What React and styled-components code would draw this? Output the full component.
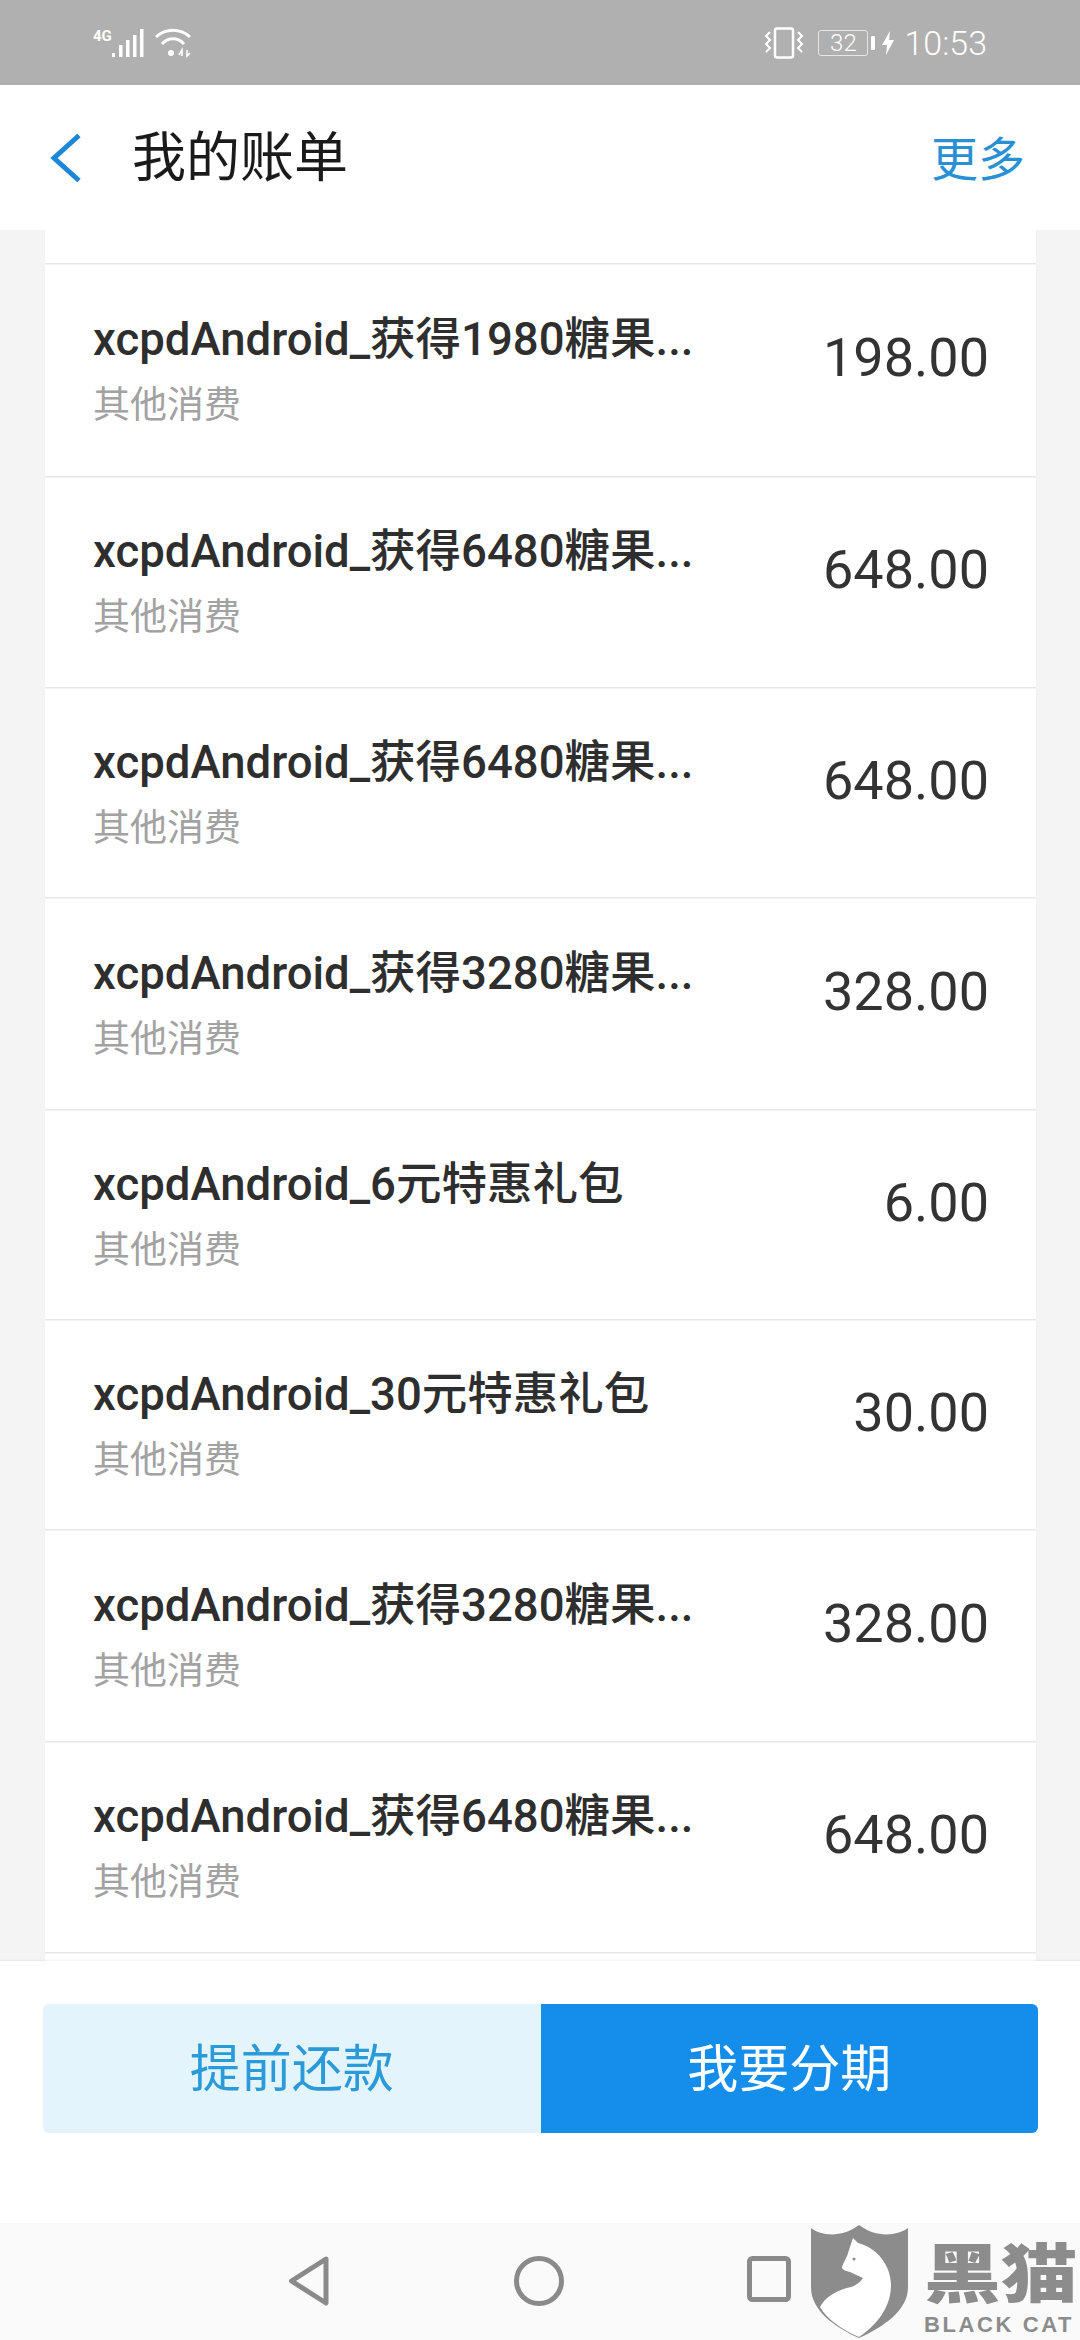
import React from 'react'
import styled, { createGlobalStyle } from 'styled-components'

const bills = [
  { title: 'xcpdAndroid_获得1980糖果...', amount: '198.00', height: 211 },
  { title: 'xcpdAndroid_获得6480糖果...', amount: '648.00', height: 209 },
  { title: 'xcpdAndroid_获得6480糖果...', amount: '648.00', height: 208 },
  { title: 'xcpdAndroid_获得3280糖果...', amount: '328.00', height: 210 },
  { title: 'xcpdAndroid_6元特惠礼包', amount: '6.00', height: 208 },
  { title: 'xcpdAndroid_30元特惠礼包', amount: '30.00', height: 208 },
  { title: 'xcpdAndroid_获得3280糖果...', amount: '328.00', height: 210 },
  { title: 'xcpdAndroid_获得6480糖果...', amount: '648.00', height: 209 },
]

function App() {
  return (
    <>
      <GlobalStyle />
      <Page>
        <StatusBar>
          <StatusGroup>
            <NetworkLabel>4G</NetworkLabel>
            <SignalIcon />
            <WifiIcon />
          </StatusGroup>
          <StatusGroup>
            <VibrateIcon />
            <Battery>32</Battery>
            <BatteryNub />
            <BoltIcon />
            <Clock>10:53</Clock>
          </StatusGroup>
        </StatusBar>

        <Header>
          <HeaderLeft>
            <svg width="32" height="48" viewBox="0 0 32 48">
              <path d="M29 1.5 L4 24 L29 46.5" fill="none" stroke="#1c87d8" strokeWidth="5" />
            </svg>
            <Title>我的账单</Title>
          </HeaderLeft>
          <MoreLink>更多</MoreLink>
        </Header>

        <BillList>
          <PartialCard />
          {bills.map((bill, i) => (
            <BillCard key={i} $height={bill.height}>
              <BillText>
                <BillTitle>{bill.title}</BillTitle>
                <BillType>其他消费</BillType>
              </BillText>
              <Amount>{bill.amount}</Amount>
            </BillCard>
          ))}
          <PartialCard />
        </BillList>

        <Footer>
          <ButtonRow>
            <ActionButton>提前还款</ActionButton>
            <ActionButton $primary>我要分期</ActionButton>
          </ButtonRow>
        </Footer>

        <NavBar>
          <svg width="42" height="50" viewBox="0 0 42 50">
            <path d="M38 3 L3.5 25 L38 47 Z" fill="none" stroke="#8a8a8a" strokeWidth="5" strokeLinejoin="round" />
          </svg>
          <svg width="50" height="50" viewBox="0 0 50 50">
            <circle cx="25" cy="25" r="22.5" fill="none" stroke="#8a8a8a" strokeWidth="5" />
          </svg>
          <svg width="44" height="46" viewBox="0 0 44 46">
            <rect x="2.5" y="2.5" width="39" height="41" rx="3" fill="none" stroke="#8a8a8a" strokeWidth="5" />
          </svg>
        </NavBar>

        <Watermark>
          <svg width="98" height="114" viewBox="0 0 98 114">
            <path
              d="M0 3 C8 10 30 14 48 0 C66 14 88 10 97 3 L97 62 C97 86 72 102 48 113 C24 102 0 86 0 62 Z"
              fill="#8c8c8c"
            />
            <path
              d="M42 13 L47 18 C65 22 80 40 80 60 C80 82 66 100 48 112 C30 104 16 94 9 82 C14 72 26 65 40 62 C46 60 50 56 52 53 L39 47 C35 46 32 45 31 43 C32 37 36 33 37 28 Z"
              fill="#fff"
            />
            <circle cx="43" cy="34" r="1.5" fill="#8c8c8c" />
          </svg>
          <WatermarkText>
            <WatermarkName>黑猫</WatermarkName>
            <WatermarkLatin>BLACK CAT</WatermarkLatin>
          </WatermarkText>
        </Watermark>
      </Page>
    </>
  )
}

function SignalIcon() {
  return (
    <SignalSvg width="32" height="30" viewBox="0 0 32 30">
      <rect x="0" y="25" width="3" height="4" fill="#fff" />
      <rect x="7" y="17" width="3.5" height="12" fill="#fff" />
      <rect x="14" y="12" width="3.5" height="17" fill="#fff" />
      <rect x="21" y="7" width="3.5" height="22" fill="#fff" />
      <rect x="28" y="1" width="3.5" height="28" fill="#fff" />
    </SignalSvg>
  )
}

function WifiIcon() {
  return (
    <svg width="38" height="30" viewBox="0 0 38 30">
      <path d="M2 9 C12 0 26 0 36 9" fill="none" stroke="#fff" strokeWidth="3" />
      <path d="M8 16 C14 9 24 9 30 16" fill="none" stroke="#fff" strokeWidth="3" />
      <circle cx="17" cy="25" r="3" fill="#fff" />
      <path d="M25 27 L28 22 L28 28 M33 22 L33 28 L36 25" fill="none" stroke="#fff" strokeWidth="1.6" />
    </svg>
  )
}

function VibrateIcon() {
  return (
    <svg width="40" height="32" viewBox="0 0 40 32">
      <rect x="11" y="1.5" width="18" height="29" rx="2" fill="none" stroke="#fff" strokeWidth="2.5" />
      <path d="M6 5 L2 9 L6 13 L2 17 L6 21 L2 25" fill="none" stroke="#fff" strokeWidth="2" />
      <path d="M34 5 L38 9 L34 13 L38 17 L34 21 L38 25" fill="none" stroke="#fff" strokeWidth="2" />
    </svg>
  )
}

function BoltIcon() {
  return (
    <BoltSvg width="12" height="24" viewBox="0 0 12 24">
      <path d="M8 0 L0 14 L5 14 L4 24 L12 9 L7 9 Z" fill="#fff" />
    </BoltSvg>
  )
}

const GlobalStyle = createGlobalStyle`
  html, body {
    margin: 0;
    padding: 0;
    background: #fff;
  }
`

const Page = styled.div`
  position: relative;
  width: 1080px;
  height: 2340px;
  display: flex;
  flex-direction: column;
  overflow: hidden;
  font-family: 'Roboto', 'Noto Sans CJK SC', sans-serif;
`

const StatusBar = styled.div`
  flex: 0 0 85px;
  display: flex;
  justify-content: space-between;
  align-items: center;
  padding: 0 93px;
  background: #b0b0b0;
  color: #fff;
`

const StatusGroup = styled.div`
  display: flex;
  align-items: center;
`

const NetworkLabel = styled.span`
  align-self: flex-start;
  font-size: 15px;
  font-weight: 700;
  line-height: 17px;
`

const SignalSvg = styled.svg`
  margin-right: 10px;
`

const Battery = styled.span`
  width: 50px;
  height: 26px;
  margin-left: 14px;
  box-sizing: border-box;
  border: 1.5px solid #e6e6e6;
  border-radius: 3px;
  text-align: center;
  font-size: 24px;
  font-weight: 300;
  line-height: 24px;
`

const BatteryNub = styled.span`
  width: 4px;
  height: 14px;
  margin-left: 3px;
  background: #fff;
  border-radius: 1px;
`

const BoltSvg = styled.svg`
  margin: 0 10px 0 7px;
`

const Clock = styled.span`
  font-size: 34px;
  font-weight: 300;
  line-height: 40px;
`

const Header = styled.div`
  flex: 0 0 145px;
  display: flex;
  justify-content: space-between;
  align-items: center;
  padding: 0 55px 0 50px;
  background: #fff;
`

const HeaderLeft = styled.div`
  display: flex;
  align-items: center;
  gap: 50px;
`

const Title = styled.h1`
  margin: -8px 0 0;
  font-size: 54px;
  font-weight: 400;
  color: #1a1a1a;
`

const MoreLink = styled.span`
  margin-top: -4px;
  font-size: 47px;
  color: #2a90d4;
`

const BillList = styled.div`
  flex: 1;
  min-height: 0;
  overflow: hidden;
  display: flex;
  flex-direction: column;
  gap: 2px;
  padding: 0 44px 0 45px;
  background: #f4f4f4;
`

const PartialCard = styled.div`
  flex: 0 0 33px;
  background: #fff;
  box-shadow: 0 1px 1px rgba(0, 0, 0, 0.05);
`

const BillCard = styled.div`
  flex: 0 0 ${(p) => p.$height}px;
  display: flex;
  justify-content: space-between;
  align-items: center;
  padding: 0 47px 0 48px;
  background: #fff;
  box-shadow: 0 1px 1px rgba(0, 0, 0, 0.05);
`

const BillText = styled.div`
  display: flex;
  flex-direction: column;
  margin-top: 4px;
`

const BillTitle = styled.div`
  font-size: 45.5px;
  font-weight: 500;
  line-height: 63px;
  color: #2e2e2e;
  white-space: nowrap;
`

const BillType = styled.div`
  margin-top: 3px;
  font-size: 37px;
  line-height: 63px;
  color: #a2a2a2;
`

const Amount = styled.div`
  margin-top: -26px;
  font-size: 54px;
  font-weight: 400;
  color: #333;
`

const Footer = styled.div`
  flex: 0 0 262px;
  box-sizing: border-box;
  padding: 43px 42px 0 43px;
  background: #fff;
  box-shadow: 0 -1px 2px rgba(0, 0, 0, 0.06);
  z-index: 1;
`

const ButtonRow = styled.div`
  display: grid;
  grid-template-columns: 1fr 1fr;
  height: 129px;
  border-radius: 6px;
  overflow: hidden;
`

const ActionButton = styled.div`
  display: flex;
  justify-content: center;
  align-items: center;
  padding-bottom: 8px;
  font-size: 51px;
  color: ${(p) => (p.$primary ? '#fff' : '#2a9bd8')};
  background: ${(p) => (p.$primary ? '#148deb' : '#e3f4fc')};
`

const NavBar = styled.div`
  flex: 0 0 117px;
  box-sizing: border-box;
  display: flex;
  align-items: flex-start;
  padding: 33px 289px 0 288px;
  justify-content: space-between;
  background: #fafafa;
`

const Watermark = styled.div`
  position: absolute;
  left: 811px;
  top: 2225px;
  display: flex;
  gap: 15px;
  color: #8c8c8c;
`

const WatermarkText = styled.div`
  display: flex;
  flex-direction: column;
  width: 154px;
`

const WatermarkName = styled.div`
  height: 88px;
  font-size: 64px;
  font-weight: 900;
  line-height: 88px;
  white-space: nowrap;
  transform: scaleX(1.2);
  transform-origin: left center;
  font-family: 'Noto Sans CJK SC', sans-serif;
`

const WatermarkLatin = styled.div`
  font-size: 22px;
  font-weight: 700;
  line-height: 24px;
  letter-spacing: 2.6px;
  white-space: nowrap;
  font-family: 'Liberation Sans', sans-serif;
`

export default App
